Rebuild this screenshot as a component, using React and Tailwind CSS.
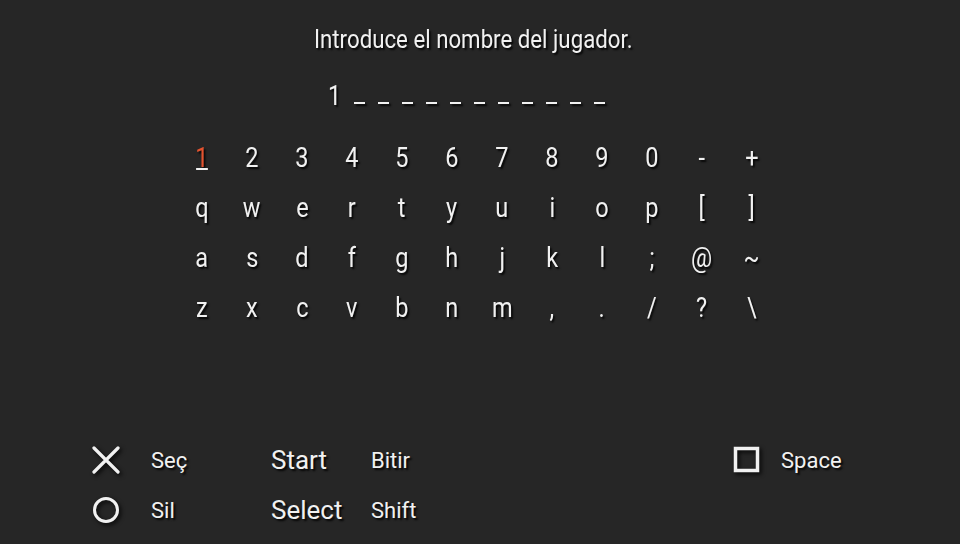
const shadow = "[text-shadow:2px_2px_2px_rgba(0,0,0,0.85)]"

const rows = [
  ["1", "2", "3", "4", "5", "6", "7", "8", "9", "0", "-", "+"],
  ["q", "w", "e", "r", "t", "y", "u", "i", "o", "p", "[", "]"],
  ["a", "s", "d", "f", "g", "h", "j", "k", "l", ";", "@", "~"],
  ["z", "x", "c", "v", "b", "n", "m", ",", ".", "/", "?", "\\"],
]

function KeyCell({ char, active }) {
  return (
    <div className="flex h-[50px] w-[50px] items-center justify-center">
      <span
        className={`relative inline-block scale-x-[0.84] text-[28px] leading-[50px] ${active ? "text-[#e4532f]" : "text-[#f1f1f1]"}`}
      >
        {char}
        {active ? <span className="absolute bottom-[13px] left-[1px] right-[1px] h-[2px] bg-[#f1f1f1]" /> : null}
      </span>
    </div>
  )
}

function CrossIcon() {
  return (
    <svg width="28" height="28" viewBox="0 0 28 28" className="drop-shadow-[2px_2px_2px_rgba(0,0,0,0.85)]">
      <path d="M2 2 L26 26 M26 2 L2 26" stroke="#f1f1f1" strokeWidth="3.2" strokeLinecap="round" fill="none" />
    </svg>
  )
}

function CircleIcon() {
  return (
    <svg width="28" height="28" viewBox="0 0 28 28" className="drop-shadow-[2px_2px_2px_rgba(0,0,0,0.85)]">
      <circle cx="14" cy="14" r="11.5" stroke="#f1f1f1" strokeWidth="3" fill="none" />
    </svg>
  )
}

function SquareIcon() {
  return (
    <svg width="28" height="28" viewBox="0 0 28 28" className="drop-shadow-[2px_2px_2px_rgba(0,0,0,0.85)]">
      <rect x="2.5" y="2.5" width="22" height="22" stroke="#f1f1f1" strokeWidth="3.5" fill="none" />
    </svg>
  )
}

export default function App() {
  return (
    <div
      className={`flex h-[544px] w-[960px] flex-col overflow-hidden bg-[#262626] font-['Roboto','Liberation_Sans',sans-serif] text-[#f1f1f1] ${shadow}`}
    >
      <div className="pl-[314px] pt-[24px] text-[25px] leading-[32px]">
        <span className="inline-block origin-left scale-x-[0.89] whitespace-nowrap">Introduce el nombre del jugador.</span>
      </div>

      <div className="mt-[13px] flex h-[40px] items-end pl-[323px]">
        <div className="flex w-[24px] justify-center text-[27px] leading-[40px]">
          <span className="relative top-[7px] inline-block scale-x-[0.86]">1</span>
        </div>
        {Array.from({ length: 11 }).map((_, i) => (
          <div key={i} className="flex h-[40px] w-[24px] items-end justify-center pb-[5px]">
            <div className="h-[2px] w-[11px] bg-[#f1f1f1] shadow-[2px_2px_2px_rgba(0,0,0,0.85)]" />
          </div>
        ))}
      </div>

      <div className="mt-[24px] flex flex-col pl-[177px]">
        {rows.map((row, r) => (
          <div key={r} className="flex">
            {row.map((c, i) => (
              <KeyCell key={c} char={c} active={r === 0 && i === 0} />
            ))}
          </div>
        ))}
      </div>

      <div className="mt-[102px] flex pl-[92px]">
        <div className="grid w-[641px] grid-cols-[59px_120px_100px_1fr] grid-rows-[50px_50px] items-center text-[22px]">
          <div className="flex items-center">
            <CrossIcon />
          </div>
          <span>Seç</span>
          <span className="text-[26px]">Start</span>
          <span>Bitir</span>
          <div className="flex items-center">
            <CircleIcon />
          </div>
          <span>Sil</span>
          <span className="text-[26px]">Select</span>
          <span>Shift</span>
        </div>
        <div className="flex h-[50px] items-center gap-[20px] text-[22px]">
          <SquareIcon />
          <span>Space</span>
        </div>
      </div>
    </div>
  )
}
